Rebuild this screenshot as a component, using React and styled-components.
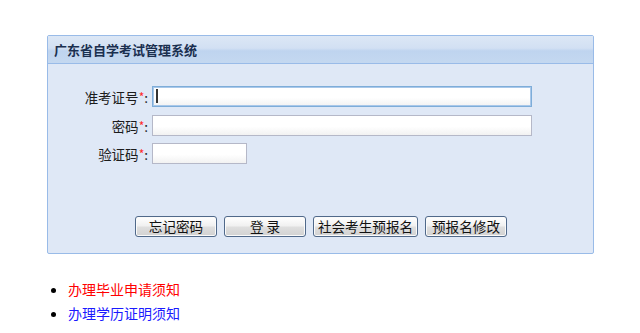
import styled, { createGlobalStyle } from 'styled-components';

const GlobalStyle = createGlobalStyle`
  html, body {
    margin: 0;
    padding: 0;
    background: #fff;
  }
  body {
    font-family: "Noto Sans CJK SC", "Liberation Sans", sans-serif;
    font-size: 13px;
    color: #222;
  }
`;

const Page = styled.div`
  width: 640px;
  height: 333px;
  padding: 35px 0 0 47px;
  box-sizing: border-box;
  overflow: hidden;
`;

const Panel = styled.div`
  width: 547px;
  border: 1px solid #99bbe8;
  border-radius: 2px;
  background: #dfe8f6;
  box-sizing: border-box;
`;

const Header = styled.div`
  height: 27px;
  line-height: 27px;
  padding-left: 6px;
  border-bottom: 1px solid #99bbe8;
  background: linear-gradient(#dce7f5 0%, #d2e0f3 45%, #bfd4ef 55%, #c4d8f0 100%);
  font-size: 13px;
  font-weight: bold;
  color: #1a2f4f;
`;

const Body = styled.div`
  padding: 22px 0 16px 0;
`;

const Form = styled.div`
  display: grid;
  grid-template-columns: 100px 1fr;
  grid-auto-rows: 21px;
  column-gap: 4px;
  row-gap: 7.5px;
  align-items: center;
`;

const Label = styled.label`
  text-align: right;
  font-size: 13.5px;
  line-height: 21px;
  height: 21px;
  color: #1c1c1c;
  white-space: nowrap;
`;

const Star = styled.span`
  color: #ff2a2a;
  font-size: 12px;
  vertical-align: 1px;
`;

const FieldWrap = styled.div`
  position: relative;
  width: ${(p) => p.$width}px;
  height: 21px;
`;

const Input = styled.input`
  display: block;
  width: 100%;
  height: 100%;
  box-sizing: border-box;
  margin: 0;
  padding: 0 4px;
  border: 1px solid ${(p) => (p.$focused ? '#7eadd9' : '#b5b8c8')};
  box-shadow: ${(p) => (p.$focused ? 'inset 0 0 0 1px #a9c8ea' : 'none')};
  background: linear-gradient(#ffffff 0%, #ffffff 55%, #f2f2f2 100%);
  font-family: inherit;
  font-size: 13px;
  outline: none;
`;

const Caret = styled.span`
  position: absolute;
  left: 4px;
  top: 3px;
  width: 2px;
  height: 14px;
  background: #333;
`;

const Buttons = styled.div`
  display: flex;
  gap: 7px;
  margin: 52px 0 0 87px;
`;

const Button = styled.button`
  width: ${(p) => p.$width}px;
  height: 21px;
  margin: 0;
  padding: 0;
  border: 1px solid #50698a;
  border-radius: 3px;
  background: linear-gradient(#ffffff 0%, #f1f1f1 45%, #dedede 55%, #d2d2d2 100%);
  box-shadow: inset 0 0 0 1px #fafafa;
  font-family: inherit;
  font-size: 13.6px;
  line-height: 19px;
  color: #111;
  cursor: pointer;
  white-space: pre;
`;

const Notices = styled.ul`
  margin: 23px 0 0 7px;
  padding: 0 0 0 14px;
  list-style: disc;
  font-size: 14px;
  line-height: 24px;
`;

const Notice = styled.li`
  color: ${(p) => p.$color};
  &::marker {
    color: #000;
  }
`;

const fields = [
  { label: '准考证号', width: 380, focused: true },
  { label: '密码', width: 380, type: 'password' },
  { label: '验证码', width: 95 },
];

const actions = [
  { text: '忘记密码', width: 82 },
  { text: '登 录', width: 82 },
  { text: '社会考生预报名', width: 105 },
  { text: '预报名修改', width: 82 },
];

export default function App() {
  return (
    <>
      <GlobalStyle />
      <Page>
        <Panel>
          <Header>广东省自学考试管理系统</Header>
          <Body>
            <Form>
              {fields.map((f) => [
                <Label key={f.label + '-l'}>
                  {f.label}
                  <Star>*</Star>:
                </Label>,
                <FieldWrap key={f.label + '-f'} $width={f.width}>
                  <Input type={f.type || 'text'} $focused={f.focused} />
                  {f.focused && <Caret />}
                </FieldWrap>,
              ])}
            </Form>
            <Buttons>
              {actions.map((a) => (
                <Button key={a.text} $width={a.width}>{a.text}</Button>
              ))}
            </Buttons>
          </Body>
        </Panel>
        <Notices>
          <Notice $color="#ff0000">办理毕业申请须知</Notice>
          <Notice $color="#1a1aff">办理学历证明须知</Notice>
        </Notices>
      </Page>
    </>
  );
}
